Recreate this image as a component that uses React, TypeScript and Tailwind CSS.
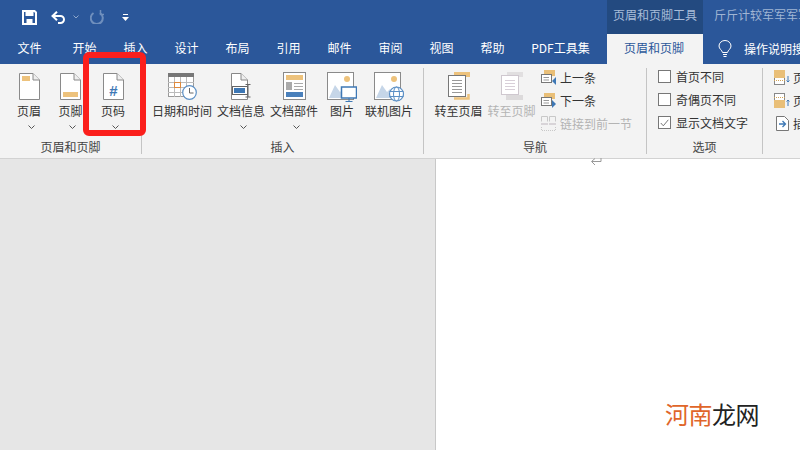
import React from "react";

const Doc = ({ children }: { children?: React.ReactNode }) => (
  <svg width="21" height="27" viewBox="0 0 21 27">
    <path d="M.5.5H14L20.500 7V26.500H.5Z" fill="#fff" stroke="#8a8a8a" />
    <path d="M14 .5V7H20.500" fill="#efefef" stroke="#8a8a8a" />
    {children}
  </svg>
);

const Chevron = () => (
  <svg width="7" height="4" viewBox="0 0 7 4"><path d="M.5.5 3.5 3.5 6.5.5" fill="none" stroke="#555" /></svg>
);

const Big = ({ label, w, icon, arrow, dim }: { label: string; w: string; icon: React.ReactNode; arrow?: boolean; dim?: boolean }) => (
  <div className={`flex flex-col items-center shrink-0 ${w}`}>
    <div className="h-[31px] flex items-end justify-center">{icon}</div>
    <div className={`mt-[2px] h-[18px] leading-[18px] text-[12px] whitespace-nowrap ${dim ? "text-[#b4b4b4]" : "text-[#333]"}`}>{label}</div>
    {arrow && <div className="mt-[4px] ml-[4px] h-[6px] flex items-center"><Chevron /></div>}
  </div>
);

const Group = ({ label, w, children, pad }: { label: string; w: string; children: React.ReactNode; pad: string }) => (
  <div className={`flex flex-col shrink-0 h-full ${w}`}>
    <div className={`flex flex-1 min-h-0 pt-[5px] ${pad}`}>{children}</div>
    <div className="h-[18px] leading-[14px] text-[12px] text-[#444] text-center whitespace-nowrap">{label}</div>
  </div>
);

const Sep = () => <div className="w-px shrink-0 bg-[#c4c4c4] mt-[4px] mb-[4px] h-[86px]" />;

const Small = ({ label, icon, dim }: { label: string; icon: React.ReactNode; dim?: boolean }) => (
  <div className="flex items-center h-[23px]">
    <div className="w-[19px] shrink-0 flex">{icon}</div>
    <span className={`text-[12px] whitespace-nowrap ${dim ? "text-[#b4b4b4]" : "text-[#333]"}`}>{label}</span>
  </div>
);

const Check = ({ label, on }: { label: string; on?: boolean }) => (
  <div className="flex items-center h-[23px]">
    <div className="w-[13px] h-[13px] border border-[#777] bg-white mr-[5px] flex items-center justify-center">
      {on && <svg width="9" height="8" viewBox="0 0 9 8"><path d="M.8 4 3.3 6.8 8.3.8" fill="none" stroke="#777" /></svg>}
    </div>
    <span className="text-[12px] text-[#333] whitespace-nowrap">{label}</span>
  </div>
);

const Tab = ({ label, w }: { label: string; w: string }) => (
  <div className={`shrink-0 text-center text-[12px] text-white leading-[28px] whitespace-nowrap ${w}`}>{label}</div>
);

const Picture = () => (
  <>
    <rect x=".5" y=".5" width="26" height="27" fill="#fff" stroke="#8a8a8a" />
    <circle cx="20" cy="7" r="3" fill="#edc27c" />
    <path d="M2 26 8 13 13 20 16 17 23 26Z" fill="#c6d6e8" />
  </>
);

const MiniDoc = ({ up, down }: { up?: boolean; down?: boolean }) => (
  <svg width="16" height="15" viewBox="0 0 16 15">
    <rect x="3" y="0" width="11" height="6" fill="#e9bf78" />
    <rect x=".5" y="4.500" width="10" height="8" fill="#fff" stroke="#777" />
    <path d="M2.500 7.500H8M2.500 10H8" stroke="#999" />
    {up && <path d="M15 7V15L11 11Z" fill="#3e78b5" />}
    {down && <path d="M11 7V15L15 11Z" fill="#3e78b5" />}
  </svg>
);

const HeadFoot = ({ top }: { top?: boolean }) => (
  <svg width="17" height="15" viewBox="0 0 17 15">
    <rect x=".5" y=".5" width="10" height="14" fill="#fff" stroke="#888" />
    {top ? <rect x="0" y="0" width="11" height="8" fill="#e9bf78" /> : <rect x="0" y="7" width="11" height="8" fill="#e9bf78" />}
    <path d={top ? "M0 10.500H11" : "M0 4.500H11"} stroke="#d2a45a" strokeDasharray="1 1" />
    <path d={top ? "M14 6V12M12.500 10.500 14 12 15.500 10.500" : "M14 13V7M12.500 8.500 14 7 15.500 8.500"} stroke="#3e78b5" fill="none" />
  </svg>
);

export default function App() {
  return (
    <div className="w-[800px] h-[450px] overflow-hidden flex flex-col bg-white font-['Noto_Sans_CJK_SC','Noto_Sans',sans-serif]">
      {/* title bar */}
      <div className="h-[34px] shrink-0 bg-[#2b579a] flex">
        <div className="w-[607px] shrink-0 flex items-center pl-[22px]">
          <svg width="15" height="15" viewBox="0 0 15 15">
            <path d="M1 1H12.500L14 2.500V14H1Z" fill="none" stroke="#fff" strokeWidth="2" />
            <rect x="3.500" y="1" width="8" height="5" fill="#fff" />
            <rect x="4.500" y="9" width="6" height="5" fill="#fff" />
          </svg>
          <svg className="ml-[14px]" width="15" height="13" viewBox="0 0 15 13">
            <path d="M2 5H9.500A3.500 3.500 0 0 1 9.500 12H7" fill="none" stroke="#fff" strokeWidth="2" />
            <path d="M6 .7 1.500 5 6 9.300" fill="none" stroke="#fff" strokeWidth="2" />
          </svg>
          <svg className="ml-[7px]" width="6" height="4" viewBox="0 0 6 4"><path d="M.5.5 3 3 5.500.5" fill="none" stroke="#8fa8cc" /></svg>
          <svg className="ml-[11px]" width="14" height="14" viewBox="0 0 14 14">
            <path d="M3.500 3A6 6 0 1 0 10 3" fill="none" stroke="#6f8fbd" strokeWidth="2" />
            <path d="M10.500 0V4.500H14" fill="none" stroke="#6f8fbd" strokeWidth="1.500" />
          </svg>
          <svg className="ml-[18px]" width="7" height="7" viewBox="0 0 7 7">
            <rect x="1" y="0" width="5" height="1" fill="#fff" />
            <path d="M0 3H7L3.500 7Z" fill="#fff" />
          </svg>
        </div>
        <div className="w-[96px] shrink-0 bg-[#234a80] text-center text-[12px] leading-[29px] text-[#a9bdd9] whitespace-nowrap">页眉和页脚工具</div>
        <div className="pl-[11px] text-[12px] leading-[29px] text-[#a0b5d4] whitespace-nowrap overflow-hidden">斤斤计较军军军军</div>
      </div>

      {/* tabs */}
      <div className="h-[30px] shrink-0 bg-[#2b579a] flex">
        <Tab label="文件" w="w-[59px]" />
        <Tab label="开始" w="w-[51px]" />
        <Tab label="插入" w="w-[51px]" />
        <Tab label="设计" w="w-[51px]" />
        <Tab label="布局" w="w-[51px]" />
        <Tab label="引用" w="w-[51px]" />
        <Tab label="邮件" w="w-[51px]" />
        <Tab label="审阅" w="w-[51px]" />
        <Tab label="视图" w="w-[51px]" />
        <Tab label="帮助" w="w-[51px]" />
        <Tab label="PDF工具集" w="w-[89px] pr-[4px]" />
        <div className="w-[96px] shrink-0 bg-[#f3f3f3] pr-[2px] text-center text-[12px] leading-[28px] text-[#2b579a] whitespace-nowrap">页眉和页脚</div>
        <div className="flex items-center pl-[15px] pb-[1px] whitespace-nowrap overflow-hidden">
          <svg width="14" height="18" viewBox="0 0 14 18" className="shrink-0">
            <path d="M4.500 12.500C4 10 1 9 1 6A6 5.500 0 0 1 13 6C13 9 10 10 9.500 12.500Z" fill="none" stroke="#fff" />
            <path d="M5 14.500H9M5.500 16.500H8.500" stroke="#fff" />
          </svg>
          <span className="ml-[12px] text-[12px] text-white">操作说明搜索</span>
        </div>
      </div>

      {/* ribbon */}
      <div className="h-[95px] shrink-0 bg-[#f3f3f3] border-b border-[#d2d2d2] flex overflow-hidden">
        <Group label="页眉和页脚" w="w-[141px]" pad="pl-[8px]">
          <Big label="页眉" w="w-[42px]" arrow icon={<Doc><rect x="3" y="3" width="8" height="5" fill="#edc27c" /></Doc>} />
          <Big label="页脚" w="w-[41px]" arrow icon={<Doc><rect x="3" y="19" width="15" height="5" fill="#edc27c" /></Doc>} />
          <Big label="页码" w="w-[44px]" arrow icon={<Doc><text x="10.500" y="23" textAnchor="middle" fontSize="15" fontWeight="700" fill="#3e78b5" fontFamily="Liberation Sans">#</text></Doc>} />
        </Group>
        <Sep />
        <Group label="插入" w="w-[281px]" pad="pl-[8px]">
          <Big label="日期和时间" w="w-[64px]" icon={
            <svg width="29" height="27" viewBox="0 0 29 27">
              <rect x=".5" y=".5" width="25" height="23" fill="#fff" stroke="#999" />
              <rect x="0" y="0" width="26" height="4" fill="#777" />
              <path d="M0 9.500H26M0 14.500H26M0 19.500H26M6.500 4V24M12.500 4V24M18.500 4V24" stroke="#bbb" />
              <rect x="6.500" y="9.500" width="6" height="5" fill="#fff" stroke="#e08a3c" />
              <circle cx="21.500" cy="19.500" r="6.800" fill="#fff" stroke="#5b8fc5" strokeWidth="1.200" />
              <path d="M21.500 15V20H25.500" fill="none" stroke="#666" />
            </svg>} />
          <div className="w-[2px] shrink-0" />
          <Big label="文档信息" w="w-[50px]" arrow icon={
            <svg width="20" height="27" viewBox="0 0 20 27">
              <path d="M.5.5H10L16.500 7V26.500H.5Z" fill="#fff" stroke="#888" />
              <path d="M10 .5V7H16.500" fill="#efefef" stroke="#888" />
              <rect x="3" y="15" width="11" height="5" fill="#3e78b5" />
              <rect x="1.500" y="13.500" width="15" height="8" fill="none" stroke="#666" />
              <path d="M14.500 11.500H19.500M14.500 24H19.500M17 11.500V24" stroke="#666" fill="none" />
            </svg>} />
          <Big label="文档部件" w="w-[56px]" arrow icon={
            <svg width="23" height="28" viewBox="0 0 23 28">
              <rect x=".5" y=".5" width="22" height="27" fill="#fff" stroke="#8a8a8a" />
              <rect x="3" y="3" width="17" height="5" fill="#edc27c" />
              <rect x="3" y="10" width="6" height="8" fill="#aaa" />
              <path d="M11 11.500H20M11 14.500H20M11 17.500H20" stroke="#aaa" />
              <rect x="3" y="20" width="17" height="5" fill="#4a80bb" />
            </svg>} />
          <Big label="图片" w="w-[40px]" icon={
            <svg className="mb-[-2px]" width="30" height="30" viewBox="0 0 30 30">
              <Picture />
              <rect x="14.500" y="15" width="15" height="11" fill="#fff" stroke="#3e78b5" strokeWidth="1.500" />
              <path d="M22 26V29M18.500 29.500H25.500" stroke="#3e78b5" />
            </svg>} />
          <Big label="联机图片" w="w-[54px]" icon={
            <svg className="mb-[-2px]" width="30" height="30" viewBox="0 0 30 30">
              <Picture />
              <circle cx="22.500" cy="22" r="7" fill="#fff" stroke="#5b8fc5" strokeWidth="1.200" />
              <ellipse cx="22.500" cy="22" rx="3" ry="7" fill="none" stroke="#5b8fc5" />
              <path d="M15.500 19.500H29.500M15.500 24.500H29.500" stroke="#5b8fc5" />
            </svg>} />
        </Group>
        <Sep />
        <Group label="导航" w="w-[222px]" pad="pl-[8px]">
          <Big label="转至页眉" w="w-[53px]" icon={
            <svg width="22" height="28" viewBox="0 0 22 28">
              <rect x="6" y="0" width="16" height="5" fill="#edc27c" />
              <path d="M6 26.500H20.500V22" fill="none" stroke="#edc27c" strokeWidth="2.500" />
              <rect x=".5" y="3.500" width="17" height="21" fill="#fff" stroke="#777" />
              <path d="M4 8.500H14M4 11.500H14M4 14.500H14M4 17.500H14M4 20.500H14" stroke="#999" />
            </svg>} />
          <Big label="转至页脚" w="w-[53px]" dim icon={
            <svg width="22" height="28" viewBox="0 0 22 28">
              <path d="M6 0H22V5H6Z" fill="#e1dfe0" />
              <rect x=".5" y="3.500" width="17" height="19" fill="#fff" stroke="#cfc8cf" />
              <path d="M4 8.500H14M4 11.500H14M4 14.500H14M4 17.500H14" stroke="#d8cfd8" />
              <rect x="5" y="23" width="17" height="5" fill="#dcdadb" />
            </svg>} />
          <div className="ml-[3px] mt-[-3px] flex flex-col">
            <Small label="上一条" icon={<MiniDoc up />} />
            <Small label="下一条" icon={<MiniDoc down />} />
            <Small label="链接到前一节" dim icon={
              <svg width="15" height="15" viewBox="0 0 15 15">
                <path d="M.5 5.500V.5H6.500V5.500M8.500 5.500V.5H14.500V5.500" fill="none" stroke="#c8c8c8" />
                <rect x="0" y="7" width="7" height="2" fill="#d8d4d8" />
                <rect x="8" y="7" width="7" height="2" fill="#d8d4d8" />
                <path d="M.5 11V14.500H14.500V11" fill="none" stroke="#c8c8c8" strokeDasharray="1 1" />
              </svg>} />
          </div>
        </Group>
        <Sep />
        <Group label="选项" w="w-[115px]" pad="pl-[11px]">
          <div className="mt-[-4px] flex flex-col">
            <Check label="首页不同" />
            <Check label="奇偶页不同" />
            <Check label="显示文档文字" on />
          </div>
        </Group>
        <Sep />
        <Group label="" w="w-[37px]" pad="pl-[11px]">
          <div className="mt-[-3px] flex flex-col">
            <Small label="页眉顶端距离" icon={<HeadFoot top />} />
            <Small label="页脚底端距离" icon={<HeadFoot />} />
            <Small label="插入对齐制表位" icon={
              <svg className="ml-[2px]" width="13" height="15" viewBox="0 0 13 15">
                <path d="M.5.5H8.500L12.500 4.500V14.500H.5Z" fill="#fff" stroke="#777" />
                <path d="M3 8H9M6.500 5 9.500 8 6.500 11" fill="none" stroke="#3e78b5" strokeWidth="1.300" />
              </svg>} />
          </div>
        </Group>
      </div>

      {/* document area */}
      <div className="flex-1 min-h-0 flex">
        <div className="w-[436px] shrink-0 bg-[#e6e6e6] border-r border-[#c8c8c8]" />
        <div className="flex-1 bg-white flex flex-col">
          <svg className="ml-[154px] mt-[-1px]" width="12" height="9" viewBox="0 0 12 9">
            <path d="M11 0V3.500H2M5 .5 1.500 3.500 5 7" fill="none" stroke="#999" />
          </svg>
          <div className="mt-auto mb-[19px] ml-[229px] text-[24px] leading-[34px] whitespace-nowrap tracking-[-0.5px]">
            <span className="text-[#e0662a]">河南</span><span className="text-[#222]">龙网</span>
          </div>
        </div>
      </div>

      {/* red highlight annotation */}
      <div className="absolute left-[83px] top-[52px] w-[63px] h-[84px] border-[6px] border-[#fb1f1c] rounded-[6px]" />
    </div>
  );
}
